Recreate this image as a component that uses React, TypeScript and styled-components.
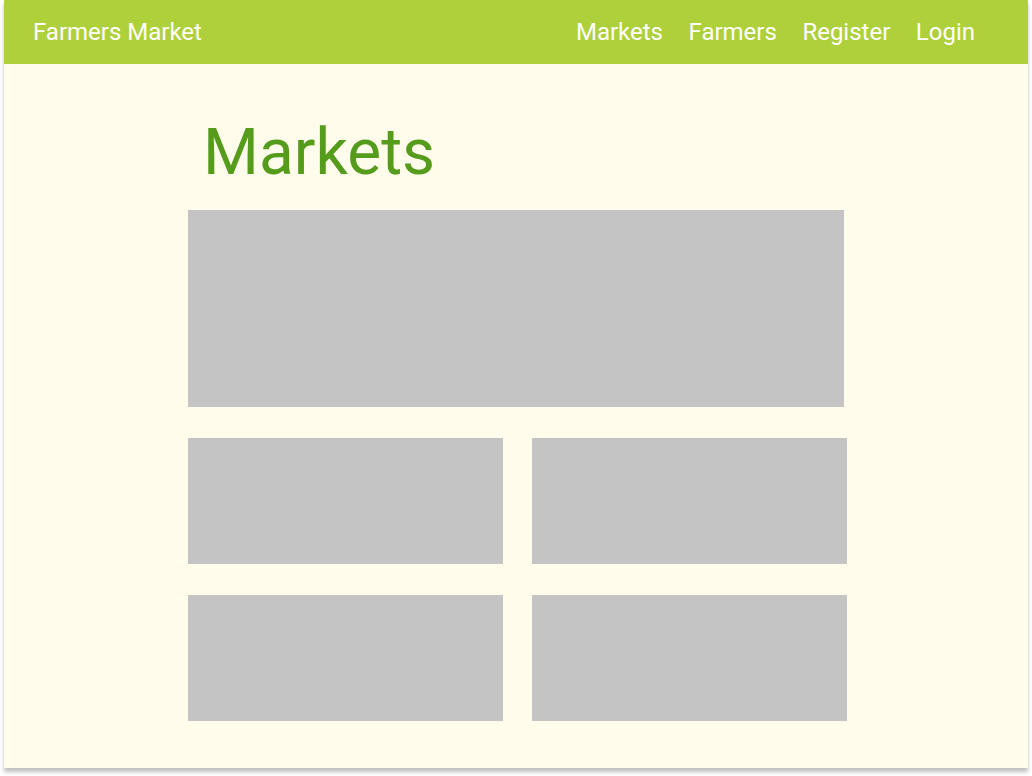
import styled, { createGlobalStyle } from 'styled-components';

const GlobalStyle = createGlobalStyle`
  html, body {
    margin: 0;
    padding: 0;
    background: #ffffff;
  }
  body {
    font-family: Roboto, "Liberation Sans", sans-serif;
  }
`;

const Page = styled.div`
  padding: 0 4px;
  width: 1032px;
  height: 776px;
  box-sizing: border-box;
`;

const Frame = styled.div`
  width: 1024px;
  height: 768px;
  background: #fffcec;
  box-shadow: 0 4px 4px rgba(0, 0, 0, 0.25);
  display: flex;
  flex-direction: column;
`;

const Header = styled.header`
  height: 64px;
  background: #aed03a;
  display: flex;
  align-items: center;
  justify-content: space-between;
  padding: 0 53px 0 29px;
  color: #ffffff;
  font-size: 24px;
`;

const Brand = styled.div`
  font-weight: 400;
`;

const Nav = styled.nav`
  display: flex;
  gap: 25.5px;
`;

const NavLink = styled.a`
  color: #ffffff;
  text-decoration: none;
`;

const Main = styled.main`
  padding: 51px 0 0 184px;
  display: flex;
  flex-direction: column;
`;

const Title = styled.h1`
  margin: 0 0 20px 15px;
  height: 75px;
  font-size: 64px;
  font-weight: 400;
  line-height: 75px;
  color: #559c1c;
`;

const Hero = styled.div`
  width: 656px;
  height: 197px;
  background: #c4c4c4;
`;

const Grid = styled.div`
  margin-top: 31px;
  display: grid;
  grid-template-columns: 315px 315px;
  column-gap: 29px;
  row-gap: 31px;
`;

const Card = styled.div`
  height: 126px;
  background: #c4c4c4;
`;

export default function App() {
  return (
    <>
      <GlobalStyle />
      <Page>
        <Frame>
          <Header>
            <Brand>Farmers Market</Brand>
            <Nav>
              <NavLink>Markets</NavLink>
              <NavLink>Farmers</NavLink>
              <NavLink>Register</NavLink>
              <NavLink>Login</NavLink>
            </Nav>
          </Header>
          <Main>
            <Title>Markets</Title>
            <Hero />
            <Grid>
              {[0, 1, 2, 3].map((i) => (
                <Card key={i} />
              ))}
            </Grid>
          </Main>
        </Frame>
      </Page>
    </>
  );
}
